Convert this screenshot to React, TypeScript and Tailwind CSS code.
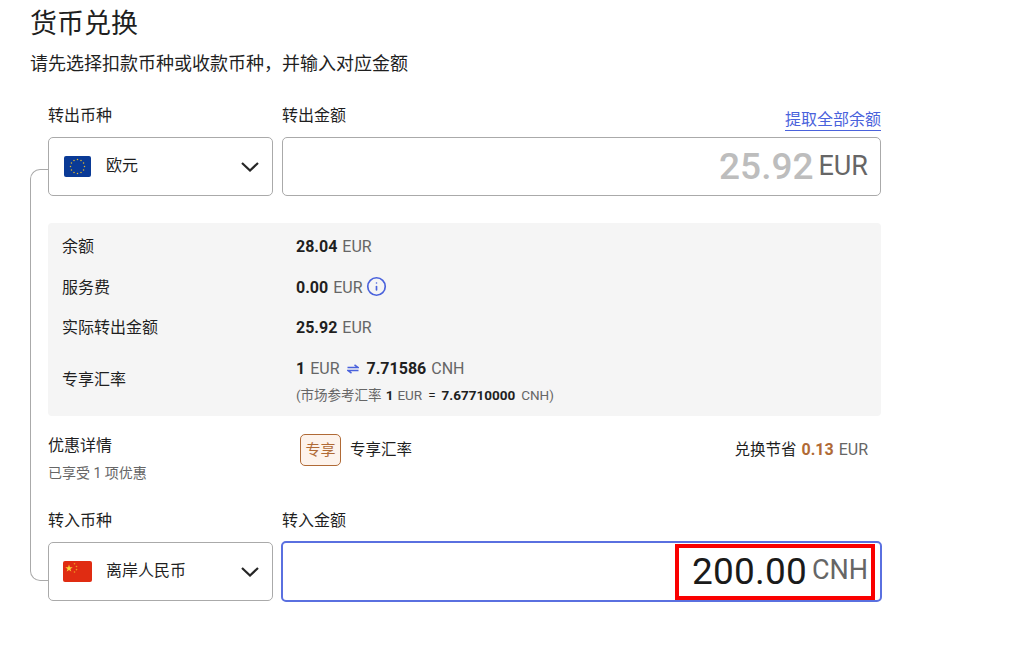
import { Info } from "lucide-react";

const sans = "font-['Roboto','Noto_Sans_CJK_SC',sans-serif]";

function EuFlag() {
  const stars = Array.from({ length: 12 }, (_, i) => {
    const a = (i * Math.PI) / 6;
    return { x: 13.5 + 7 * Math.cos(a), y: 10.5 + 7 * Math.sin(a) };
  });
  return (
    <svg width="27" height="21" viewBox="0 0 27 21" className="shrink-0">
      <rect width="27" height="21" rx="2" fill="#0a3a96" />
      {stars.map((s, i) => (
        <circle key={i} cx={s.x} cy={s.y} r="0.75" fill="#e0b92e" />
      ))}
    </svg>
  );
}

function CnFlag() {
  return (
    <svg width="29" height="21" viewBox="0 0 29 21" className="shrink-0">
      <rect width="29" height="21" rx="2" fill="#e02c12" />
      <polygon
        points="6,3.5 6.9,6.2 9.7,6.2 7.4,7.9 8.3,10.6 6,8.9 3.7,10.6 4.6,7.9 2.3,6.2 5.1,6.2"
        fill="#f7d23a"
      />
      <circle cx="11.5" cy="2.8" r="0.8" fill="#ef9d20" />
      <circle cx="13.5" cy="5.5" r="0.8" fill="#ef9d20" />
      <circle cx="13.5" cy="8.6" r="0.8" fill="#ef9d20" />
      <circle cx="11.5" cy="11" r="0.8" fill="#ef9d20" />
    </svg>
  );
}

function Chevron() {
  return (
    <svg width="18" height="10" viewBox="0 0 18 10" className="ml-auto shrink-0">
      <polyline points="1,1 9,8.5 17,1" fill="none" stroke="#262626" strokeWidth="2.2" />
    </svg>
  );
}

function SwapArrows() {
  return (
    <svg width="12" height="10" viewBox="0 0 12 10" className="mx-[7px] shrink-0">
      <path d="M0.5 3.5H11L7.5 0.8" fill="none" stroke="#4a62dc" strokeWidth="1.5" />
      <path d="M11.5 6.5H1L4.5 9.2" fill="none" stroke="#4a62dc" strokeWidth="1.5" />
    </svg>
  );
}

type AmountProps = {
  value: string;
  unit: string;
};

function Amount({ value, unit }: AmountProps) {
  return (
    <span className="text-[16px] leading-[20px] text-[#666]">
      <b className="mr-[5px] font-bold text-[#1f1f1f]">{value}</b>
      {unit}
    </span>
  );
}

export default function App() {
  return (
    <div className={`h-[645px] w-[1013px] overflow-hidden bg-white text-[#1f1f1f] ${sans}`}>
      <div className="pt-[2px] pl-[31px]">
        <h1 className="-ml-[1px] text-[27px] leading-[44px] font-normal">货币兑换</h1>
        <p className="mt-[8px] -ml-[1px] text-[18px] leading-[20px]">请先选择扣款币种或收款币种，并输入对应金额</p>
      </div>

      <div className="relative mt-[32px] ml-[48px] w-[833px]">
        <div className="absolute top-[63px] bottom-[21px] -left-[18px] w-[18px] rounded-l-[10px] border-y border-l border-[#aaaaaa]" />

        <div className="flex h-[20px] text-[16px] leading-[20px]">
          <span className="w-[234px]">转出币种</span>
          <span>转出金额</span>
          <span className="mt-[4px] ml-auto h-[21px] border-b border-[#4a62dc] text-[#4a62dc]">提取全部余额</span>
        </div>

        <div className="mt-[11px] flex gap-[9px]">
          <div className="relative flex h-[59px] w-[225px] items-center rounded-[5px] border border-[#aaaaaa] bg-white pr-[13px] pl-[15px]">
            <EuFlag />
            <span className="ml-[15px] -translate-y-[1px] text-[16px]">欧元</span>
            <Chevron />
          </div>
          <div className="flex h-[59px] flex-1 items-center justify-end rounded-[5px] border border-[#aaaaaa] pr-[12px]">
            <span className="text-[37px] leading-none font-medium text-[#bdbdbd]">25.92</span>
            <span className="ml-[5px] text-[27px] leading-none text-[#666]">EUR</span>
          </div>
        </div>

        <div className="mt-[27px] h-[193px] rounded-[4px] bg-[#f5f5f5] px-[14px] pt-[3px] text-[16px]">
          <div className="flex h-[41px] items-center">
            <span className="w-[234px]">余额</span>
            <Amount value="28.04" unit="EUR" />
          </div>
          <div className="flex h-[41px] items-center">
            <span className="w-[234px]">服务费</span>
            <Amount value="0.00" unit="EUR" />
            <Info size={21} strokeWidth={1.9} className="ml-[3px] -translate-y-[1px] text-[#4a62dc]" />
          </div>
          <div className="flex h-[40px] items-center">
            <span className="w-[234px]">实际转出金额</span>
            <Amount value="25.92" unit="EUR" />
          </div>
          <div className="flex items-center pt-[11px]">
            <span className="w-[234px] translate-y-[-2px]">专享汇率</span>
            <div>
              <div className="flex h-[20px] items-center leading-[20px] text-[#666]">
                <b className="mr-[5px] font-bold text-[#1f1f1f]">1</b>
                EUR
                <SwapArrows />
                <b className="mr-[5px] ml-[1px] font-bold text-[#1f1f1f]">7.71586</b>
                CNH
              </div>
              <div className="mt-[6px] flex h-[20px] items-center text-[13.5px] leading-[20px] text-[#666]">
                (市场参考汇率
                <b className="mx-[4px] font-bold text-[#1f1f1f]">1</b>
                EUR
                <b className="mx-[6px] font-normal text-[#1f1f1f]">=</b>
                <b className="mr-[6px] font-bold text-[#1f1f1f]">7.67710000</b>
                CNH)
              </div>
            </div>
          </div>
        </div>

        <div className="mt-[18px] flex h-[66px] items-start">
          <div className="w-[252px] pt-[2px]">
            <div className="text-[16px] leading-[20px]">优惠详情</div>
            <div className="mt-[8px] text-[14px] leading-[18px] text-[#666]">已享受 1 项优惠</div>
          </div>
          <span className="flex h-[32px] w-[41px] items-center justify-center rounded-[5px] border border-[#b06a36] bg-[#fdf3ec] text-[15px] text-[#b06a36]">
            专享
          </span>
          <span className="ml-[9px] text-[15.5px] leading-[32px]">专享汇率</span>
          <span className="mr-[13px] ml-auto text-[15.5px] leading-[32px] text-[#666]">
            <span className="text-[#1f1f1f]">兑换节省</span>
            <b className="mx-[5px] text-[16px] font-bold text-[#b06a36]">0.13</b>
            <span className="text-[16px]">EUR</span>
          </span>
        </div>

        <div className="mt-[11px] flex h-[20px] text-[16px] leading-[20px]">
          <span className="w-[234px]">转入币种</span>
          <span>转入金额</span>
        </div>

        <div className="mt-[10px] flex gap-[8px]">
          <div className="relative mt-[1px] flex h-[59px] w-[225px] items-center rounded-[5px] border border-[#aaaaaa] bg-white pr-[13px] pl-[14px]">
            <CnFlag />
            <span className="ml-[14px] -translate-y-[1px] text-[16px]">离岸人民币</span>
            <Chevron />
          </div>
          <div className="relative -mr-[1px] flex h-[61px] flex-1 items-center justify-end rounded-[5px] border-2 border-[#5a70e0] pr-[12px]">
            <span className="text-[37px] leading-none font-[450] tracking-[0.2px] text-[#1a1a1a]">200.00</span>
            <span className="ml-[5px] -translate-y-[1px] text-[27px] leading-none text-[#666]">CNH</span>
            <div className="absolute top-[1px] right-[5px] h-[56px] w-[200px] border-4 border-[#fa0000]" />
          </div>
        </div>
      </div>
    </div>
  );
}
